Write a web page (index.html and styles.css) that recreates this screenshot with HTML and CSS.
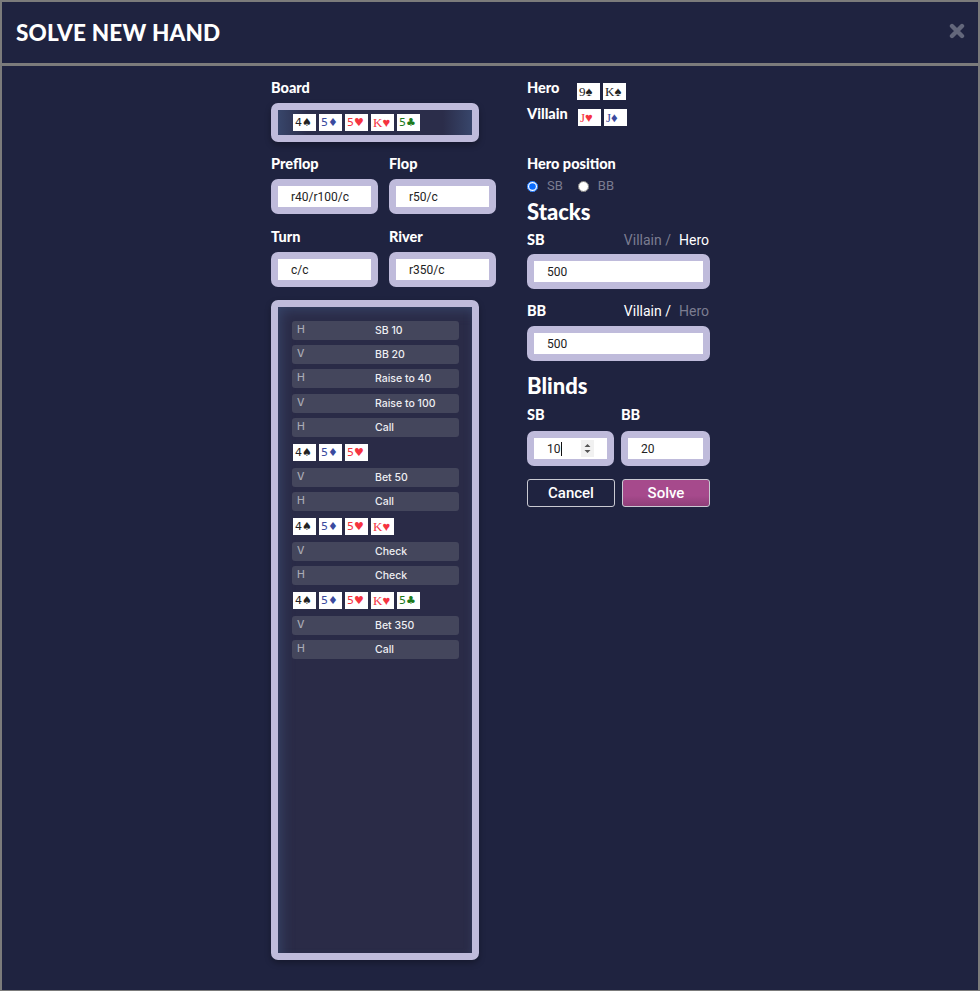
FILE: index.html
```html
<!DOCTYPE html>
<html lang="en">
<head>
    <meta charset="UTF-8">
    <meta name="viewport" content="width=device-width, initial-scale=1.0">
    <title>Solve new hand</title>
    <link rel="stylesheet" href="styles.css">
</head>
<body>
    <div id="modal">
        <div id="mhead">
            <h1>SOLVE NEW HAND</h1>
            <svg class="close" width="16" height="16" viewBox="0 0 16 16"><path d="M3 3L13 13M13 3L3 13" stroke="#63677b" stroke-width="4.4" stroke-linecap="round"/></svg>
        </div>
        <div id="mbody">
            <div id="left">
                <div class="label">Board</div>
                <div class="box wide board">
                    <div class="cards">
                        <span class="card black">4♠</span>
                        <span class="card blue">5♦</span>
                        <span class="card red">5♥</span>
                        <span class="card red serif">K♥</span>
                        <span class="card green">5♣</span>
                    </div>
                </div>
                <div class="pair">
                    <div class="elem">
                        <div class="label">Preflop</div>
                        <div class="box"><input type="text" value="r40/r100/c"></div>
                    </div>
                    <div class="elem">
                        <div class="label">Flop</div>
                        <div class="box"><input type="text" value="r50/c"></div>
                    </div>
                </div>
                <div class="pair second">
                    <div class="elem">
                        <div class="label">Turn</div>
                        <div class="box"><input type="text" value="c/c"></div>
                    </div>
                    <div class="elem">
                        <div class="label">River</div>
                        <div class="box"><input type="text" value="r350/c"></div>
                    </div>
                </div>
                <div class="box wide history">
                    <div class="row"><span class="who">H</span><span class="act">SB 10</span></div>
                    <div class="row"><span class="who">V</span><span class="act">BB 20</span></div>
                    <div class="row"><span class="who">H</span><span class="act">Raise to 40</span></div>
                    <div class="row"><span class="who">V</span><span class="act">Raise to 100</span></div>
                    <div class="row"><span class="who">H</span><span class="act">Call</span></div>
                    <div class="cards street">
                        <span class="card black">4♠</span>
                        <span class="card blue">5♦</span>
                        <span class="card red">5♥</span>
                    </div>
                    <div class="row"><span class="who">V</span><span class="act">Bet 50</span></div>
                    <div class="row"><span class="who">H</span><span class="act">Call</span></div>
                    <div class="cards street">
                        <span class="card black">4♠</span>
                        <span class="card blue">5♦</span>
                        <span class="card red">5♥</span>
                        <span class="card red serif">K♥</span>
                    </div>
                    <div class="row"><span class="who">V</span><span class="act">Check</span></div>
                    <div class="row"><span class="who">H</span><span class="act">Check</span></div>
                    <div class="cards street">
                        <span class="card black">4♠</span>
                        <span class="card blue">5♦</span>
                        <span class="card red">5♥</span>
                        <span class="card red serif">K♥</span>
                        <span class="card green">5♣</span>
                    </div>
                    <div class="row"><span class="who">V</span><span class="act">Bet 350</span></div>
                    <div class="row"><span class="who">H</span><span class="act">Call</span></div>
                </div>
            </div>
            <div id="right">
                <div class="player">
                    <div class="label hero">Hero</div>
                    <div class="cards">
                        <span class="card black serif">9♠</span>
                        <span class="card black serif">K♠</span>
                    </div>
                </div>
                <div class="player">
                    <div class="label villain">Villain</div>
                    <div class="cards">
                        <span class="card red serif">J♥</span>
                        <span class="card blue serif">J♦</span>
                    </div>
                </div>
                <div class="label position">Hero position</div>
                <div class="radios">
                    <label><input type="radio" name="pos" checked>SB</label>
                    <label><input type="radio" name="pos">BB</label>
                </div>
                <h2>Stacks</h2>
                <div class="stack first">
                    <div class="label">SB</div>
                    <div class="seat"><span class="dim">Villain /</span><span>Hero</span></div>
                </div>
                <div class="box full"><input type="text" value="500"></div>
                <div class="stack">
                    <div class="label">BB</div>
                    <div class="seat"><span>Villain /</span><span class="dim">Hero</span></div>
                </div>
                <div class="box full"><input type="text" value="500"></div>
                <h2 class="blinds">Blinds</h2>
                <div class="blindrow">
                    <div class="elem sbblind">
                        <div class="label">SB</div>
                        <div class="box">
                            <div class="numinput">
                                <span>10</span><span class="caret"></span>
                                <svg class="spin" width="13" height="17" viewBox="0 0 13 17"><path d="M3.5 7L6.5 4L9.5 7Z M3.5 10L6.5 13L9.5 10Z" fill="#555"/></svg>
                            </div>
                        </div>
                    </div>
                    <div class="elem bbblind">
                        <div class="label">BB</div>
                        <div class="box"><input type="text" value="20"></div>
                    </div>
                </div>
                <div class="buttons">
                    <button class="cancel">Cancel</button>
                    <button class="solve">Solve</button>
                </div>
            </div>
        </div>
    </div>
</body>
</html>
```
FILE: styles.css
```css
*{
    margin: 0;
    padding: 0;
    box-sizing: border-box;
}
html,body{
    width: 100%;
    height: 100%;
    background-color: #fff;
}
#modal{
    width: 100%;
    height: 991px;
    background-color: #1f2340;
    border: 2px solid #7b7b7b;
    border-bottom-width: 1px;
    font-family: Lato, sans-serif;
    color: #fff;
}
#mhead{
    display: flex;
    align-items: center;
    justify-content: space-between;
    height: 64px;
    padding: 0 13px 1px 14px;
    border-bottom: 3px solid #7b7b7b;
}
#mhead h1{
    font-size: 22.5px;
    font-weight: 900;
    letter-spacing: 0.2px;
}
.close{
    margin-top: -3px;
}
#mbody{
    display: flex;
    padding: 14px 0 0 269px;
}
#left{
    width: 225px;
}
#right{
    width: 183px;
    margin-left: 31px;
}
.label{
    height: 16px;
    margin-bottom: 7px;
    font-size: 14.5px;
    font-weight: 900;
    line-height: 16px;
}
.box{
    height: 35px;
    padding: 7px;
    background-color: #bfbbdb;
    border-radius: 7px;
}
.box input, .numinput{
    display: block;
    width: 100%;
    height: 21px;
    padding-left: 13px;
    border: 0;
    outline: 0;
    background-color: #fff;
    font-family: Roboto, sans-serif;
    font-size: 12px;
    color: #222;
}
.wide{
    width: 208px;
    box-shadow: 0 3px 6px rgba(0,0,0,.3);
}
.board{
    height: 39px;
    margin-bottom: 14px;
}
.board .cards{
    height: 25px;
    padding: 4px 0 0 15px;
    background: linear-gradient(90deg, #38466b, #2b2d4a 15%, #2b2d4a 85%, #38466b);
}
.cards{
    display: flex;
    gap: 3px;
}
.card{
    display: block;
    width: 23px;
    height: 17px;
    padding-left: 2px;
    background-color: #fff;
    font-family: "DejaVu Sans", sans-serif;
    font-size: 11px;
    line-height: 17px;
    white-space: nowrap;
    overflow: hidden;
}
.serif{
    font-family: "Liberation Serif", serif;
    font-size: 13px;
}
.black{ color: #222; }
.blue{ color: #3a4a9e; }
.red{ color: #f5333f; }
.green{ color: #1c7a1c; }
.pair{
    display: flex;
    gap: 11px;
}
.pair .elem{
    width: 107px;
}
.second{
    margin-top: 15px;
}
.history{
    height: 660px;
    margin-top: 13px;
    padding: 14px 13px 0 14px;
    border: 7px solid #bfbbdb;
    background-color: #2a2b47;
    box-shadow: 0 3px 6px rgba(0,0,0,.3), inset 8px 8px 14px -6px #38466b, inset -4px 0 10px -6px #38466b;
}
.row{
    display: flex;
    height: 19px;
    margin-bottom: 5.2px;
    background-color: #44465c;
    border-radius: 3px;
    font-family: Inter, sans-serif;
    font-size: 10.5px;
    font-weight: 500;
    line-height: 20px;
    color: #eeeef2;
}
.who{
    width: 83px;
    padding-left: 5px;
    line-height: 18px;
    color: #a9aab4;
}
.street{
    margin: 7px 0 7px 1px;
}
.player{
    display: flex;
    height: 26px;
}
.player .cards{
    margin-top: 3px;
}
.hero{
    width: 50px;
}
.villain{
    width: 51px;
}
.position{
    margin: 24px 0 0 0;
}
.radios{
    display: flex;
    gap: 15px;
    height: 14px;
    margin-top: 7px;
    font-family: Roboto, sans-serif;
    font-size: 13px;
    line-height: 14px;
    color: #7b7c90;
}
.radios label{
    display: flex;
    align-items: center;
    gap: 9px;
}
.radios input{
    width: 11px;
    height: 11px;
    margin: 0;
    accent-color: #0a6cff;
}
h2{
    height: 24px;
    margin-top: 7px;
    font-size: 22px;
    font-weight: 900;
    line-height: 24px;
}
.stack{
    display: flex;
    justify-content: space-between;
    height: 23px;
    margin-top: 14px;
}
.first{
    height: 22px;
    margin-top: 8px;
}
.seat{
    display: flex;
    gap: 8px;
    height: 16px;
    padding-right: 1px;
    font-family: Roboto, sans-serif;
    font-size: 14px;
    line-height: 16px;
}
.dim{
    color: #7b7c90;
}
.blinds{
    margin-top: 13px;
}
.blindrow{
    display: flex;
    gap: 7px;
    margin-top: 9px;
}
.blindrow .label{
    margin-bottom: 8px;
}
.sbblind{
    width: 87px;
}
.bbblind{
    width: 89px;
}
.numinput{
    display: flex;
    align-items: center;
}
.caret{
    width: 1px;
    height: 14px;
    background-color: #111;
}
.spin{
    margin-left: auto;
    margin-right: 13px;
    background-color: #f1f1f1;
}
.buttons{
    display: flex;
    gap: 7px;
    margin-top: 13px;
}
.buttons button{
    width: 88px;
    height: 28px;
    border: 1px solid #c9c9d2;
    border-radius: 3px;
    font-family: Roboto, sans-serif;
    font-size: 15px;
    font-weight: 500;
    color: #fff;
}
.cancel{
    background-color: #1f2340;
}
.solve{
    background: linear-gradient(180deg, #a64a8c 60%, #8f3f79);
}
```
